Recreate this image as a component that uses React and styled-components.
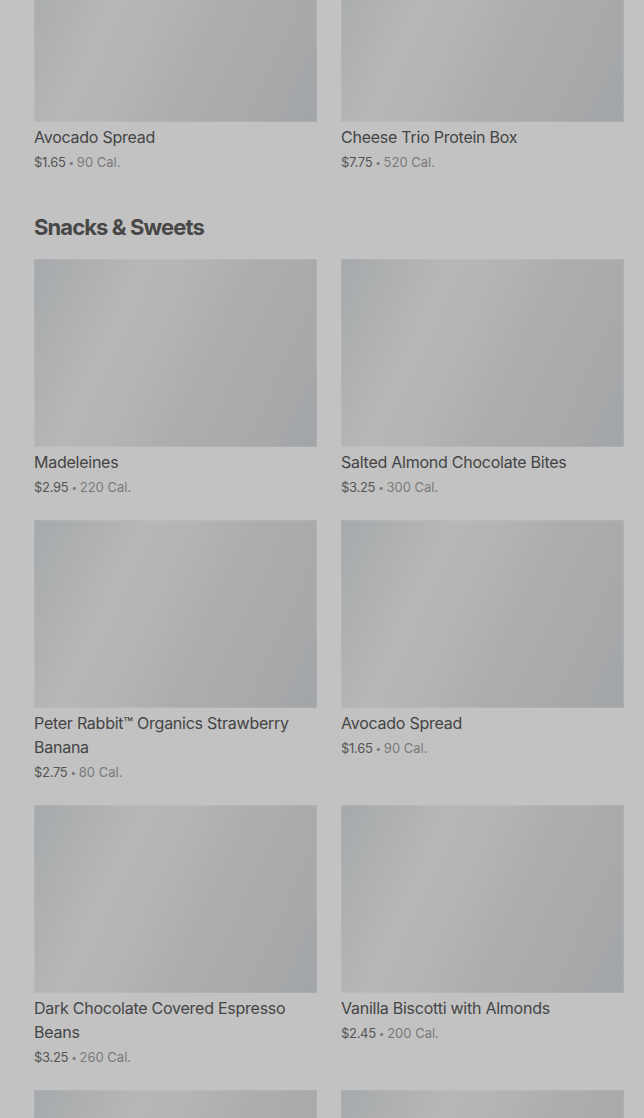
import React from "react";
import styled, { createGlobalStyle } from "styled-components";

const Global = createGlobalStyle`
  html, body { margin: 0; padding: 0; background: #c2c2c2; }
  body { font-family: Inter, "Noto Sans", "Liberation Sans", sans-serif; overflow: hidden; }
`;

const Page = styled.main`
  padding: 0 20px 40px 34px;
  margin-top: -66px;
`;

const Section = styled.section`
  & + & { margin-top: 39px; }
`;

const Heading = styled.h2`
  margin: 0 0 16px;
  font-size: 22px;
  line-height: 32px;
  font-weight: 700;
  letter-spacing: -0.9px;
  color: #474747;
`;

const Grid = styled.div`
  display: grid;
  grid-template-columns: 1fr 1fr;
  column-gap: 24px;
  row-gap: 23px;
  align-items: start;
`;

const Card = styled.article`
  display: flex;
  flex-direction: column;
`;

const Thumb = styled.div`
  height: 188px;
  background: linear-gradient(
    115deg,
    #a6a9ac 0%,
    #adafb0 14%,
    #b7b7b7 30%,
    #b4b4b4 44%,
    #adadad 60%,
    #a9aaab 78%,
    #a2a5a8 100%
  );
  box-shadow: inset 0 0 0 1px rgba(255, 255, 255, 0.08);
`;

const Name = styled.div`
  margin-top: 3px;
  font-size: 16px;
  line-height: 24px;
  font-weight: 400;
  color: #454545;
  letter-spacing: -0.25px;
`;

const Meta = styled.div`
  margin-top: 3px;
  height: 20px;
  font-size: 13px;
  line-height: 20px;
  color: #555555;
  letter-spacing: -0.3px;
`;

const Cal = styled.span`
  color: #7a7a7a;
  letter-spacing: 0;
`;

const Dot = styled.span`
  color: #7a7a7a;
  font-size: 10px;
  line-height: 1;
  vertical-align: 1px;
  margin: 0 3px;
`;

const top = [
  { name: "Avocado Spread", price: "$1.65", cal: "90 Cal." },
  { name: "Cheese Trio Protein Box", price: "$7.75", cal: "520 Cal." },
];

const snacks = [
  { name: "Madeleines", price: "$2.95", cal: "220 Cal." },
  { name: "Salted Almond Chocolate Bites", price: "$3.25", cal: "300 Cal." },
  { name: "Peter Rabbit™ Organics Strawberry Banana", price: "$2.75", cal: "80 Cal." },
  { name: "Avocado Spread", price: "$1.65", cal: "90 Cal." },
  { name: "Dark Chocolate Covered Espresso Beans", price: "$3.25", cal: "260 Cal." },
  { name: "Vanilla Biscotti with Almonds", price: "$2.45", cal: "200 Cal." },
  { name: "Marshmallow Dream Bar", price: "$2.45", cal: "210 Cal." },
  { name: "Chocolate Chip Cookie", price: "$2.95", cal: "360 Cal." },
];

function Item({ item }) {
  return (
    <Card>
      <Thumb />
      <Name>{item.name}</Name>
      <Meta>
        {item.price}
        <Dot>•</Dot>
        <Cal>{item.cal}</Cal>
      </Meta>
    </Card>
  );
}

export default function App() {
  return (
    <>
      <Global />
      <Page>
        <Section>
          <Grid>
            {top.map((it, i) => (
              <Item key={i} item={it} />
            ))}
          </Grid>
        </Section>
        <Section>
          <Heading>Snacks &amp; Sweets</Heading>
          <Grid>
            {snacks.map((it, i) => (
              <Item key={i} item={it} />
            ))}
          </Grid>
        </Section>
      </Page>
    </>
  );
}
